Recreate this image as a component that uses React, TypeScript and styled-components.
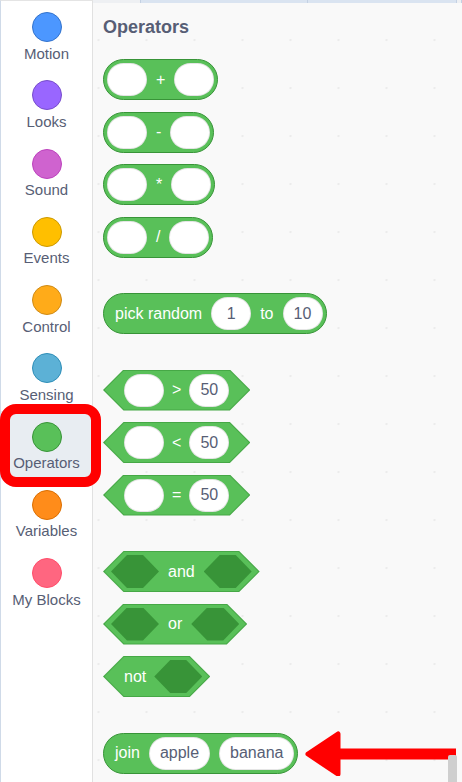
import React from "react";
import styled, { createGlobalStyle, css } from "styled-components";

const GlobalStyle = createGlobalStyle`
  html, body { margin: 0; padding: 0; background: #ffffff; }
  body { font-family: "Liberation Sans", Arial, sans-serif; }
  * { box-sizing: border-box; }
`;

const Layout = styled.div`
  display: flex;
  width: 462px;
  height: 782px;
  overflow: hidden;
`;

const Sidebar = styled.nav`
  width: 93px;
  flex: none;
  display: flex;
  flex-direction: column;
  background: #ffffff;
  border-left: 1px solid #cfdae8;
  border-right: 1px solid #e1e1e1;
  border-top: 1px solid #e4e4e4;
`;

const CategoryItem = styled.div<{ $selected?: boolean }>`
  position: relative;
  height: 68.25px;
  flex: none;
  display: flex;
  flex-direction: column;
  align-items: center;
  padding-top: 11px;
  background: ${(p) => (p.$selected ? "#e8edf2" : "transparent")};
`;

const CategoryDot = styled.span<{ $color: string; $border: string }>`
  width: 30px;
  height: 30px;
  border-radius: 50%;
  background: ${(p) => p.$color};
  border: 1px solid ${(p) => p.$border};
`;

const CategoryLabel = styled.span`
  margin-top: 2.5px;
  font-size: 15px;
  line-height: 18px;
  color: #575e75;
  white-space: nowrap;
`;

const Annotation = styled.div`
  position: absolute;
  z-index: 5;
  left: -1px;
  top: -6.5px;
  width: 101px;
  height: 83px;
  border: 10px solid #ff0000;
  border-radius: 16px;
  pointer-events: none;
`;

const Palette = styled.main`
  position: relative;
  flex: 1;
  display: flex;
  flex-direction: column;
  background-color: #f9f9f9;
  background-image: radial-gradient(circle at center, #ececec 0 1px, transparent 1.6px);
  background-size: 48px 48px;
  background-position: -18.5px 16px;
`;

const TabStrip = styled.div`
  height: 3px;
  flex: none;
  display: flex;
`;

const TabPiece = styled.div<{ $width?: number; $light?: boolean }>`
  ${(p) => (p.$width ? css`width: ${p.$width}px;` : css`flex: 1;`)}
  background: ${(p) => (p.$light ? "#eef0f3" : "#dae4f1")};
  border-right: 1px solid #c4d1e3;
`;

const Content = styled.div`
  display: flex;
  flex-direction: column;
  padding: 13px 0 0 10px;
`;

const Heading = styled.h2`
  margin: 0 0 21px;
  font-size: 18px;
  line-height: 22px;
  font-weight: 700;
  color: #575e75;
`;

const Groups = styled.div`
  display: flex;
  flex-direction: column;
  gap: 35.5px;
`;

const Group = styled.div`
  display: flex;
  flex-direction: column;
  align-items: flex-start;
  gap: 11.5px;
`;

const blockText = css`
  color: #ffffff;
  font-size: 16px;
  line-height: 1;
  white-space: nowrap;
`;

const Reporter = styled.div<{ $pl: number; $pr: number; $gap: number }>`
  ${blockText}
  display: inline-flex;
  align-items: center;
  height: 41px;
  padding: 0 ${(p) => p.$pr}px 0 ${(p) => p.$pl}px;
  gap: ${(p) => p.$gap}px;
  background: #59c059;
  border: 1px solid #389438;
  border-radius: 20.5px;
`;

const BoolBlock = styled.div<{ $pl: number; $pr: number; $gap: number }>`
  ${blockText}
  position: relative;
  isolation: isolate;
  display: inline-flex;
  align-items: center;
  height: 41px;
  padding: 0 ${(p) => p.$pr}px 0 ${(p) => p.$pl}px;
  gap: ${(p) => p.$gap}px;

  &::before,
  &::after {
    content: "";
    position: absolute;
    z-index: -1;
  }
  &::before {
    inset: 0;
    background: #46a846;
    clip-path: polygon(20.5px 0, calc(100% - 20.5px) 0, 100% 50%, calc(100% - 20.5px) 100%, 20.5px 100%, 0 50%);
  }
  &::after {
    inset: 1px 1.5px;
    background: #59c059;
    clip-path: polygon(19.5px 0, calc(100% - 19.5px) 0, 100% 50%, calc(100% - 19.5px) 100%, 19.5px 100%, 0 50%);
  }
`;

const Input = styled.span`
  display: inline-flex;
  align-items: center;
  justify-content: center;
  height: 33px;
  min-width: 40px;
  padding: 0 10px;
  border-radius: 16.5px;
  background: #ffffff;
  border: 1px solid rgba(0, 0, 0, 0.1);
  color: #575e75;
  font-size: 16px;
`;

const HexSlot = styled.span`
  width: 48px;
  height: 33px;
  background: #389438;
  clip-path: polygon(16px 0, 32px 0, 100% 50%, 32px 100%, 16px 100%, 0 50%);
`;

const JoinRow = styled.div`
  position: relative;
`;

const Arrow = styled.svg`
  position: absolute;
  left: 201px;
  top: -5px;
`;

const Scrollbar = styled.div`
  position: absolute;
  right: 5px;
  bottom: 0;
  width: 9px;
  height: 27px;
  background: #cfcfcf;
  border-radius: 2px 2px 0 0;
`;

const categories = [
  { name: "Motion", color: "#4c97ff", border: "#3373cc" },
  { name: "Looks", color: "#9966ff", border: "#774dcb" },
  { name: "Sound", color: "#cf63cf", border: "#bd42bd" },
  { name: "Events", color: "#ffbf00", border: "#cc9900" },
  { name: "Control", color: "#ffab19", border: "#cf8b17" },
  { name: "Sensing", color: "#5cb1d6", border: "#2e8eb8" },
  { name: "Operators", color: "#59c059", border: "#389438" },
  { name: "Variables", color: "#ff8c1a", border: "#db6e00" },
  { name: "My Blocks", color: "#ff6680", border: "#ff4d6a" },
];

const mathOps = ["+", "-", "*", "/"];
const compareOps = [">", "<", "="];

export default function App() {
  return (
    <>
      <GlobalStyle />
      <Layout>
        <Sidebar>
          {categories.map((c) => (
            <CategoryItem key={c.name} $selected={c.name === "Operators"}>
              <CategoryDot $color={c.color} $border={c.border} />
              <CategoryLabel>{c.name}</CategoryLabel>
              {c.name === "Operators" && <Annotation />}
            </CategoryItem>
          ))}
        </Sidebar>
        <Palette>
          <TabStrip>
            <TabPiece $width={48} $light />
            <TabPiece $width={167} />
            <TabPiece $width={149} />
            <TabPiece $light />
          </TabStrip>
          <Content>
            <Heading>Operators</Heading>
            <Groups>
              <Group>
                {mathOps.map((op) => (
                  <Reporter key={op} $pl={3} $pr={3} $gap={9}>
                    <Input />
                    <span>{op}</span>
                    <Input />
                  </Reporter>
                ))}
              </Group>
              <Group>
                <Reporter $pl={11} $pr={3} $gap={9}>
                  <span>pick random</span>
                  <Input>1</Input>
                  <span>to</span>
                  <Input>10</Input>
                </Reporter>
              </Group>
              <Group>
                {compareOps.map((op) => (
                  <BoolBlock key={op} $pl={21} $pr={21} $gap={8}>
                    <Input />
                    <span>{op}</span>
                    <Input>50</Input>
                  </BoolBlock>
                ))}
              </Group>
              <Group>
                <BoolBlock $pl={8} $pr={8} $gap={9}>
                  <HexSlot />
                  <span>and</span>
                  <HexSlot />
                </BoolBlock>
                <BoolBlock $pl={8} $pr={8} $gap={9}>
                  <HexSlot />
                  <span>or</span>
                  <HexSlot />
                </BoolBlock>
                <BoolBlock $pl={21} $pr={8} $gap={8}>
                  <span>not</span>
                  <HexSlot />
                </BoolBlock>
              </Group>
              <Group>
                <JoinRow>
                  <Reporter $pl={11} $pr={3} $gap={9}>
                    <span>join</span>
                    <Input>apple</Input>
                    <Input>banana</Input>
                  </Reporter>
                  <Arrow width="152" height="48" viewBox="0 0 152 48">
                    <path
                      d="M4 26 L34 6 L34 46 Z"
                      fill="#ff0000"
                      stroke="#ff0000"
                      strokeWidth="5"
                      strokeLinejoin="round"
                    />
                    <rect x="32" y="20.5" width="120" height="11" fill="#ff0000" />
                  </Arrow>
                </JoinRow>
              </Group>
            </Groups>
          </Content>
          <Scrollbar />
        </Palette>
      </Layout>
    </>
  );
}
